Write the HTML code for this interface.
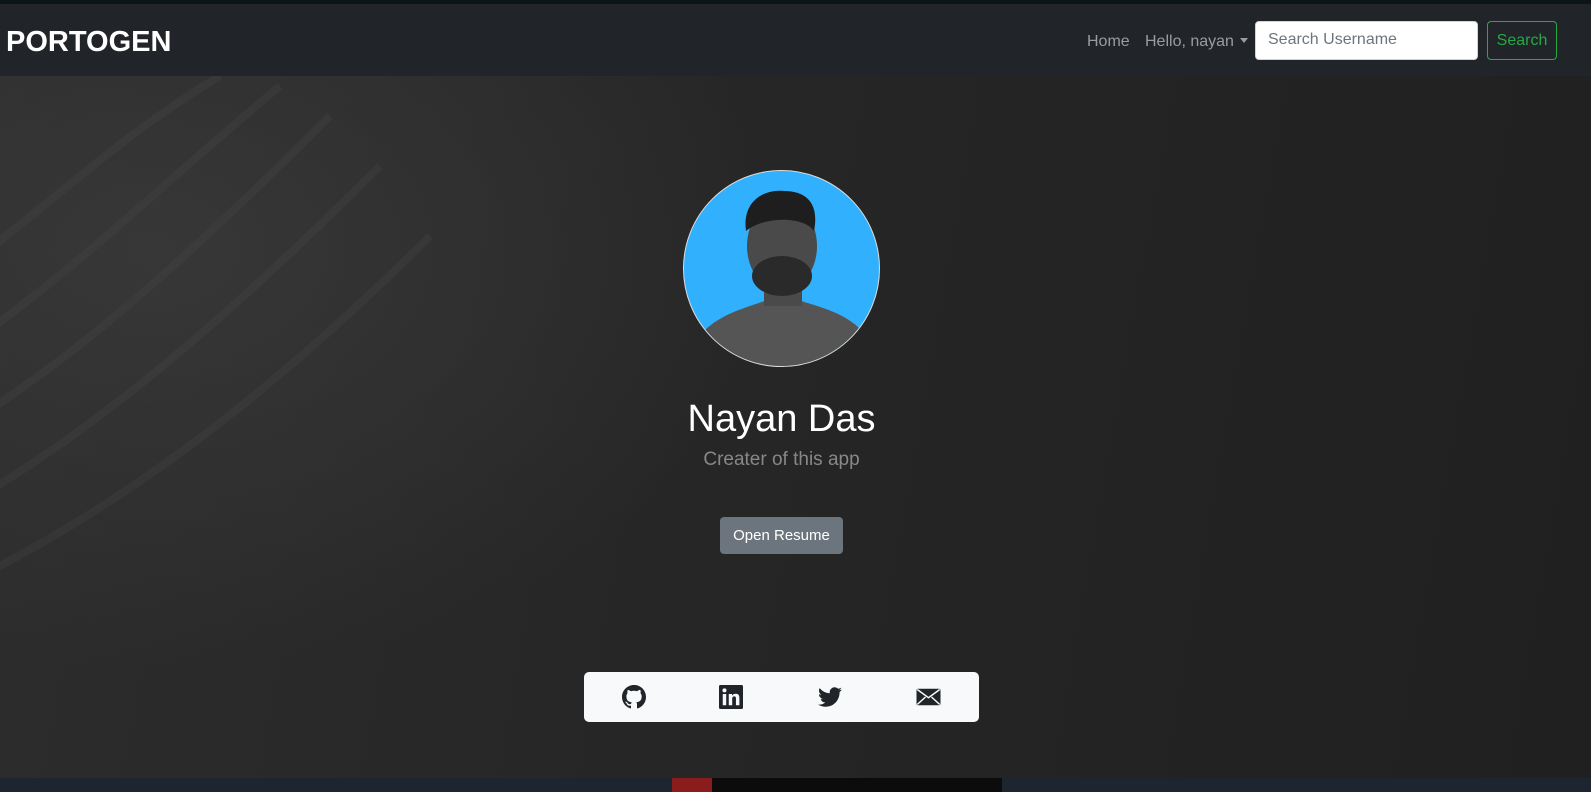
<!DOCTYPE html>
<html><head><meta charset="utf-8"><style>
*{margin:0;padding:0;box-sizing:border-box}
body{width:1591px;height:792px;overflow:hidden;font-family:"Liberation Sans",sans-serif;position:relative;
background:radial-gradient(ellipse 900px 600px at 150px 250px,#373737,rgba(40,40,40,0) 70%),linear-gradient(100deg,#2d2d2d,#262626 45%,#202020);}
.top{position:absolute;left:0;top:0;width:1591px;height:4px;background:#0b1416}
.nav{position:absolute;left:0;top:4px;width:1591px;height:72px;background:#212529}
.brand{position:absolute;left:6px;top:22px;color:#fff;font-weight:bold;font-size:29px;letter-spacing:0}
.lnk{position:absolute;top:29px;color:#9a9da0;font-size:16px}
.caret{display:inline-block;border-top:5px solid #9a9da0;border-left:4px solid transparent;border-right:4px solid transparent;margin-left:6px;vertical-align:3px}
.inp{position:absolute;left:1255px;top:17px;width:223px;height:39px;background:#fff;border:1px solid #ced4da;border-radius:4px;color:#6c757d;font-size:16px;padding:9px 12px}
.sbtn{position:absolute;left:1487px;top:17px;width:70px;height:39px;border:1px solid #28a745;border-radius:4px;color:#28a745;font-size:16px;text-align:center;line-height:37px}
.av{position:absolute;left:683px;top:170px;width:197px;height:197px;border-radius:50%;background:#31b0fe;border:1px solid #ddd;overflow:hidden}
h1{position:absolute;left:0;width:1563px;top:398px;text-align:center;color:#fff;font-weight:normal;font-size:38px}
.sub{position:absolute;left:0;width:1563px;top:449px;text-align:center;color:#888;font-size:19px}
.rb{position:absolute;left:720px;top:517px;width:123px;height:37px;background:#6c757d;border-radius:4px;color:#fff;font-size:15px;text-align:center;line-height:37px}
.soc{position:absolute;left:584px;top:672px;width:395px;height:50px;background:#f8f9fa;border-radius:5px}
.soc svg{position:absolute;top:13px}
.bot{position:absolute;left:0;top:778px;width:1591px;height:14px;background:#1d2630}
.wave{position:absolute;left:0;top:76px}
</style></head><body>
<svg class="wave" width="700" height="560" viewBox="0 0 700 560">
<g fill="none" stroke="#555" stroke-width="8" opacity=".18">
<path d="M-20 180 C60 120 120 60 220 0"/>
<path d="M-20 260 C80 190 160 110 280 10"/>
<path d="M-20 340 C90 270 200 170 330 40"/>
<path d="M-20 420 C100 350 230 240 380 90"/>
<path d="M-20 500 C120 430 270 320 430 160"/>
</g></svg>
<div class="top"></div>
<div class="nav">
<div class="brand">PORTOGEN</div>
<div class="lnk" style="left:1087px">Home</div>
<div class="lnk" style="left:1145px">Hello, nayan<span class="caret"></span></div>
<div class="inp">Search Username</div>
<div class="sbtn">Search</div>
</div>
<div class="av">
<svg width="197" height="197" viewBox="0 0 197 197">
<path d="M20 160 C40 140 70 135 85 128 L112 128 C130 135 160 140 178 160 L178 197 L20 197Z" fill="#555"/>
<rect x="80" y="105" width="38" height="30" fill="#4a4a4a"/>
<ellipse cx="98" cy="75" rx="35" ry="45" fill="#4a4a4a"/>
<path d="M62 60 C58 30 80 18 100 20 C125 20 135 35 130 60 C120 45 80 45 62 60Z" fill="#1e1e1e"/>
<ellipse cx="98" cy="105" rx="30" ry="20" fill="#2a2a2a"/>
</svg></div>
<h1>Nayan Das</h1>
<div class="sub">Creater of this app</div>
<div class="rb">Open Resume</div>
<div class="soc">
<svg style="left:38px" width="24" height="24" viewBox="0 0 16 16"><path fill="#212529" d="M8 0C3.58 0 0 3.58 0 8c0 3.54 2.290 6.530 5.470 7.590.4.07.55-.17.55-.38 0-.19-.01-.82-.01-1.49-2.010.37-2.530-.49-2.690-.94-.09-.23-.48-.94-.82-1.130-.28-.15-.68-.52-.01-.53.63-.01 1.080.58 1.230.82.72 1.210 1.870.87 2.330.66.07-.52.28-.87.51-1.070-1.780-.2-3.640-.89-3.640-3.950 0-.87.31-1.590.82-2.150-.08-.2-.36-1.020.08-2.120 0 0 .67-.21 2.200.82.64-.18 1.320-.27 2-.27.68 0 1.360.09 2 .27 1.530-1.040 2.200-.82 2.200-.82.44 1.100.16 1.920.08 2.120.51.56.82 1.270.82 2.150 0 3.070-1.870 3.750-3.650 3.950.29.25.54.73.54 1.480 0 1.070-.01 1.930-.01 2.200 0 .21.15.46.55.38A8.013 8.013 0 0016 8c0-4.420-3.580-8-8-8z"/></svg>
<svg style="left:135px" width="24" height="24" viewBox="0 0 16 16"><rect width="16" height="16" rx="1" fill="#212529"/><rect x="2.5" y="6" width="2.3" height="7.5" fill="#f8f9fa"/><circle cx="3.65" cy="3.6" r="1.35" fill="#f8f9fa"/><path d="M6.5 6h2.2v1.1C9.2 6.3 10 5.8 11.2 5.8c2 0 2.4 1.3 2.4 3v4.7h-2.3V9.3c0-1-.1-1.7-1.1-1.7-1.1 0-1.4.8-1.4 1.7v4.2H6.5z" fill="#f8f9fa"/></svg>
<svg style="left:234px" width="24" height="24" viewBox="0 0 16 16"><path fill="#212529" d="M5.03 14.5c6.04 0 9.34-5 9.34-9.34 0-.14 0-.28-.01-.42A6.7 6.7 0 0016 3.04a6.5 6.5 0 01-1.89.52 3.3 3.3 0 001.45-1.82 6.6 6.6 0 01-2.09.8 3.28 3.28 0 00-5.59 2.99A9.3 9.3 0 011.11 2.1a3.28 3.28 0 001.02 4.38A3.3 3.3 0 01.64 6.07v.04a3.28 3.28 0 002.63 3.22 3.3 3.3 0 01-1.48.06 3.29 3.29 0 003.07 2.28A6.6 6.6 0 010 13.030a9.3 9.3 0 005.03 1.47"/></svg>
<svg style="left:332px" width="25" height="24" viewBox="0 0 16 16"><rect x="0" y="2.5" width="16" height="11" rx="1" fill="#212529"/><path d="M0.5 3L8 8.5 15.5 3M0.5 13L6 8M15.5 13L10 8" stroke="#f8f9fa" stroke-width="1" fill="none"/></svg>
</div>
<div class="bot"><div style="position:absolute;left:672px;top:0;width:40px;height:14px;background:#8a1c1c"></div><div style="position:absolute;left:712px;top:0;width:290px;height:14px;background:#0c0c0c"></div></div>
</body></html>
